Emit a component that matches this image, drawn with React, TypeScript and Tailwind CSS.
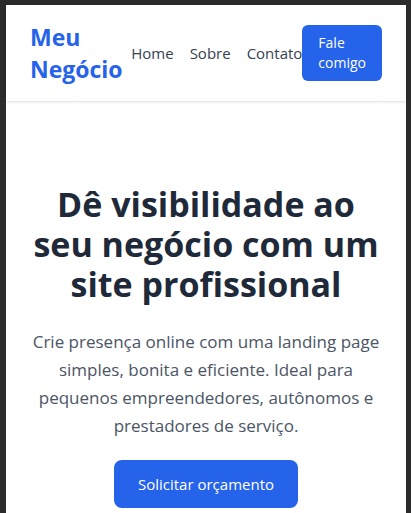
import React from "react";

const links = ["Home", "Sobre", "Contato"];

const App = (): JSX.Element => {
  return (
    <div
      className="min-h-screen bg-[#2b2b2b] pt-[5px] pl-[6px] pr-[5px]"
      style={{ fontFamily: '"Open Sans", "Noto Sans", sans-serif' }}
    >
      <div className="min-h-[508px] bg-white">
        <header className="flex items-center justify-between px-6 py-4 shadow-sm">
          <a href="#" className="text-[23px] font-bold leading-8 text-[#2563eb]">
            Meu Negócio
          </a>
          <nav className="flex items-center">
            <ul className="flex gap-4 text-[15px] text-gray-700">
              {links.map((l) => (
                <li key={l}>
                  <a href="#">{l}</a>
                </li>
              ))}
            </ul>
            <a
              href="#"
              className="rounded-md bg-[#2563eb] px-4 py-2 text-sm text-white"
            >
              Fale comigo
            </a>
          </nav>
        </header>

        <section className="px-6 pt-[83px] text-center">
          <h1 className="mb-6 text-[34px] font-bold leading-10 text-gray-800">
            Dê visibilidade ao seu negócio com um site profissional
          </h1>
          <p className="mb-5 text-[17px] leading-7 text-gray-600">
            Crie presença online com uma landing page simples, bonita e
            eficiente. Ideal para pequenos empreendedores, autônomos e
            prestadores de serviço.
          </p>
          <a
            href="#"
            className="inline-block rounded-lg bg-[#2563eb] px-6 py-3 text-[15px] leading-6 text-white"
          >
            Solicitar orçamento
          </a>
        </section>
      </div>
    </div>
  );
};

export default App;
